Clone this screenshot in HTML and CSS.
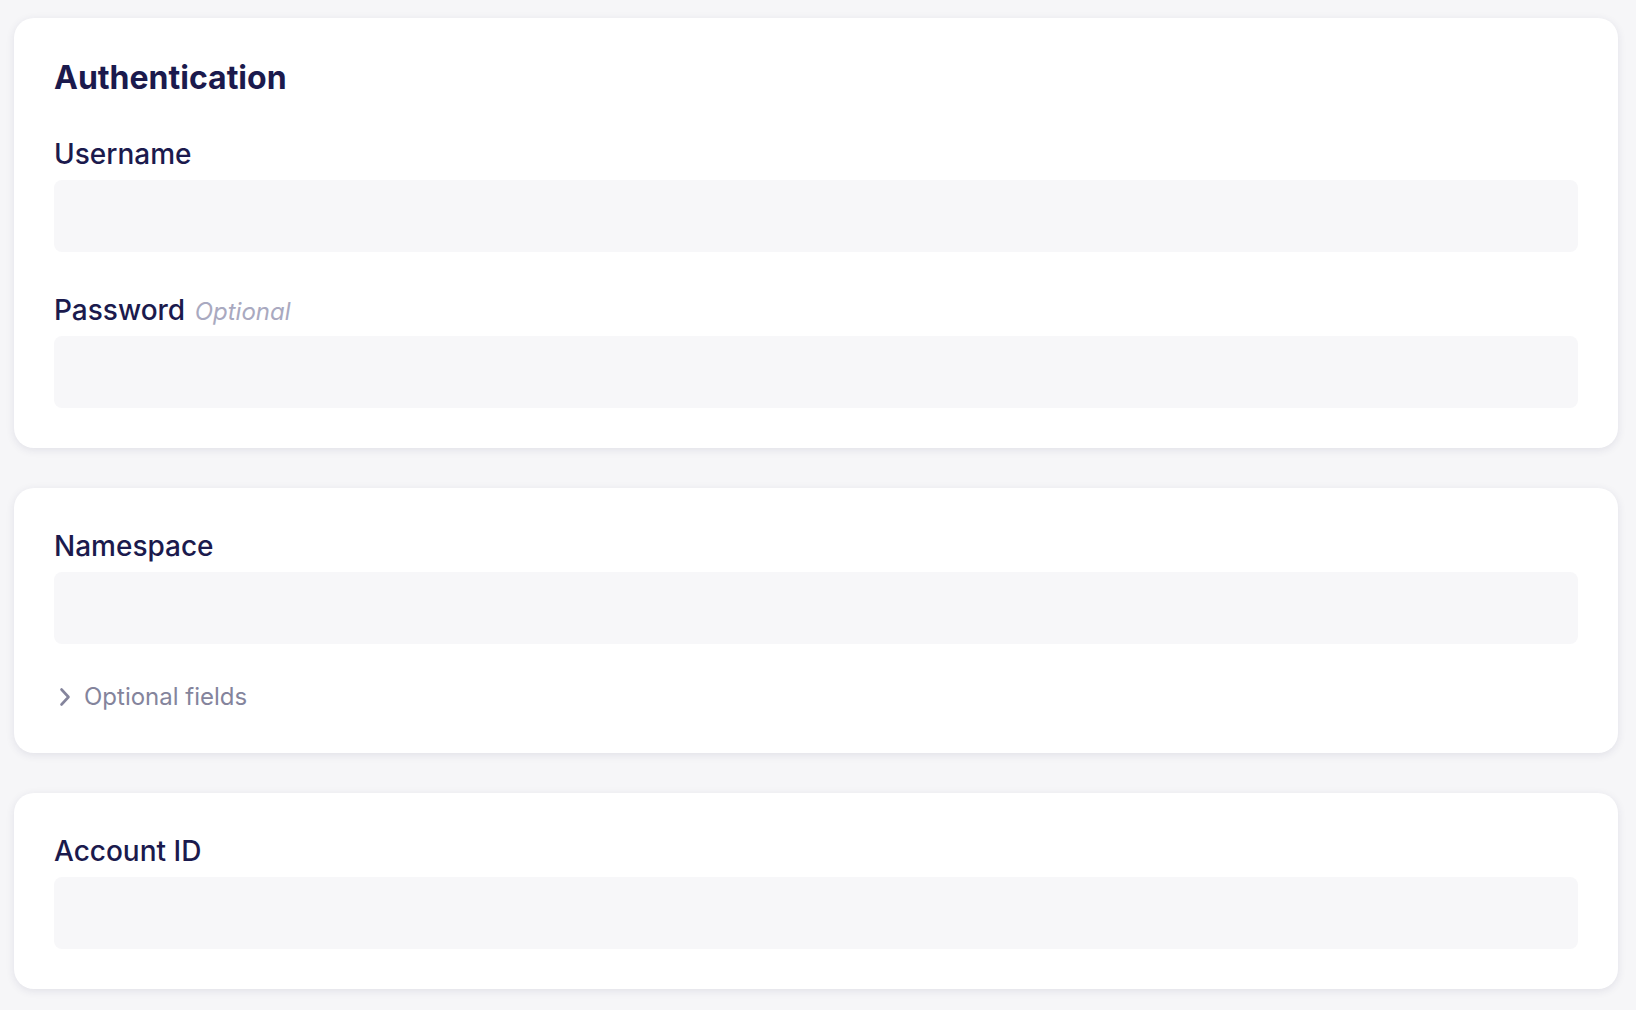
FILE: index.html
```html
<!DOCTYPE html>
<html lang="en">
<head>
    <meta charset="UTF-8">
    <meta name="viewport" content="width=device-width, initial-scale=1.0">
    <title>Connection settings</title>
    <link rel="stylesheet" href="styles.css">
</head>
<body>
    <div class="page">
        <section class="card">
            <h2 class="card-title">Authentication</h2>
            <div class="field">
                <label class="field-label" for="username">Username</label>
                <input class="field-input" id="username" type="text">
            </div>
            <div class="field">
                <label class="field-label" for="password">Password <span class="optional">Optional</span></label>
                <input class="field-input" id="password" type="password">
            </div>
        </section>

        <section class="card">
            <div class="field">
                <label class="field-label" for="namespace">Namespace</label>
                <input class="field-input" id="namespace" type="text">
            </div>
            <button class="toggle" type="button">
                <svg class="toggle-icon" width="14" height="20" viewBox="0 0 14 20" fill="none">
                    <path d="M3.5 2.5 L10.5 10 L3.5 17.5" stroke="currentColor" stroke-width="2.6" stroke-linecap="round" stroke-linejoin="round"/>
                </svg>
                Optional fields
            </button>
        </section>

        <section class="card">
            <div class="field">
                <label class="field-label" for="account">Account ID</label>
                <input class="field-input" id="account" type="text">
            </div>
        </section>
    </div>
</body>
</html>
```

FILE: styles.css
```css
body {
    margin: 0;
    padding: 0;
    background: #f6f6f8;
    font-family: Inter, 'Noto Sans', sans-serif;
    color: #1b1a4d;
}

.page {
    display: flex;
    flex-direction: column;
    gap: 40px;
    padding: 18px 18px 20px 14px;
}

.card {
    background: #fff;
    border-radius: 20px;
    padding: 40px;
    box-shadow: 0 2px 8px rgba(40, 40, 90, 0.10);
    display: flex;
    flex-direction: column;
    gap: 40px;
}

.card-title {
    margin: 0 0 -2px;
    font-size: 32px;
    line-height: 40px;
    font-weight: 700;
    color: #1b1a4d;
}

.field {
    display: flex;
    flex-direction: column;
    gap: 8px;
}

.field-label {
    font-size: 28px;
    line-height: 36px;
    font-weight: 500;
    color: #1b1a4d;
}

.optional {
    margin-left: 2px;
    font-size: 24px;
    line-height: 1;
    font-style: italic;
    font-weight: 400;
    color: #a9a9c0;
}

.field-input {
    height: 72px;
    box-sizing: border-box;
    border: none;
    border-radius: 8px;
    background: #f7f7f9;
    padding: 0 20px;
    font-family: inherit;
    font-size: 24px;
    outline: none;
}

.toggle {
    display: flex;
    align-items: center;
    gap: 12px;
    margin: -3px 0 0;
    padding: 0 0 0 4px;
    border: none;
    background: none;
    font-family: inherit;
    font-size: 24px;
    line-height: 32px;
    color: #84849c;
    cursor: pointer;
    text-align: left;
}

.toggle-icon {
    color: #84849c;
}
```
